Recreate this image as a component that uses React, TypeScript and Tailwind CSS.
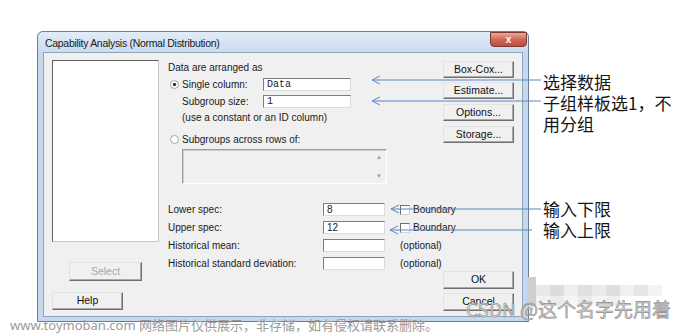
import React from "react";

const ui = { fontFamily: '"Liberation Sans", Arial, sans-serif' };
const cjk = { fontFamily: '"Noto Sans CJK SC", "Noto Sans", sans-serif' };

function Btn({ label, w = "w-[71px]", h = "h-[17px]", disabled = false }: { label: string; w?: string; h?: string; disabled?: boolean }) {
  return (
    <div
      className={`${w} ${h} shrink-0 flex items-center justify-center bg-[#f0f0f0] border border-t-[#e3e3e3] border-l-[#e3e3e3] border-b-[#6f6f6f] border-r-[#6f6f6f] shadow-[inset_-1px_-1px_0_#a9a9a9] text-[10.5px] ${disabled ? "text-[#a8a8a8]" : "text-[#111]"}`}
    >
      {label}
    </div>
  );
}

function TextBox({ value, w, mono = false }: { value?: string; w: string; mono?: boolean }) {
  return (
    <div
      className={`${w} h-full shrink-0 bg-white border border-t-[#7d7d7d] border-l-[#7d7d7d] border-b-[#dcdcdc] border-r-[#dcdcdc] flex items-center pl-[3px] text-[10px] text-[#222] leading-none`}
      style={mono ? { fontFamily: '"Liberation Mono", monospace' } : undefined}
    >
      {value}
    </div>
  );
}

function Radio({ checked }: { checked?: boolean }) {
  return (
    <svg width="9" height="9" viewBox="0 0 9 9" className="shrink-0">
      <circle cx="4.5" cy="4.5" r="4" fill="#fff" stroke="#9a9a9a" strokeWidth="0.9" />
      {checked && <circle cx="4.5" cy="4.5" r="1.7" fill="#333" />}
    </svg>
  );
}

function Check() {
  return <div className="w-[10px] h-[10px] bg-white border border-t-[#6d6d6d] border-l-[#6d6d6d] border-b-[#d5d5d5] border-r-[#d5d5d5] shrink-0" />;
}

function SpecRow({ label, value, extra, check, mt }: { label: string; value?: string; extra: string; check?: boolean; mt: string }) {
  return (
    <div className={`flex items-center h-[13px] ${mt}`}>
      <div className="w-[155px] shrink-0 text-[10px] text-[#1a1a1a]">{label}</div>
      <TextBox value={value} w="w-[62px]" />
      <div className="ml-[15px] shrink-0 flex items-center gap-[3px] text-[10px] text-[#1a1a1a] whitespace-nowrap">
        {check && <Check />}
        <span>{extra}</span>
      </div>
    </div>
  );
}

function Arrow({ x1, x2, y }: { x1: number; x2: number; y: number }) {
  return (
    <g stroke="#5b86c5" strokeWidth="1" fill="none">
      <line x1={x1} y1={y} x2={x2} y2={y} />
      <polyline points={`${x1 + 8},${y - 4} ${x1},${y} ${x1 + 8},${y + 4}`} />
    </g>
  );
}

export default function App() {
  return (
    <div className="w-[692px] h-[336px] bg-white relative overflow-hidden" style={ui}>
      <div className="flex pt-[31px] pl-[37px]">
        {/* Window */}
        <div className="w-[492px] h-[291px] shrink-0 flex flex-col border border-[#6a7d94] rounded-t-[6px] bg-[#c6d8ed]">
          {/* title bar */}
          <div className="h-[20px] flex items-start rounded-t-[6px] bg-gradient-to-b from-[#e2ecf7] to-[#cadcf0]">
            <div className="pl-[7px] pt-[6px] text-[10.5px] text-[#1a1a1a] leading-none tracking-[-0.3px]">
              Capability Analysis (Normal Distribution)
            </div>
            <div className="ml-auto mr-[1px] w-[37px] h-[15px] rounded-b-[4px] border border-[#7a3a33] bg-gradient-to-b from-[#e9a99c] via-[#d0685a] to-[#c24a3b] flex items-center justify-center text-white text-[10px] font-bold leading-none">
              x
            </div>
          </div>
          {/* client */}
          <div className="mx-[5px] mb-[4px] flex-1 border border-[#8ea3bd] bg-[#f0f0f0] flex pt-[7px] pl-[8px]">
            {/* left column */}
            <div className="w-[107px] shrink-0 flex flex-col">
              <div className="h-[182px] bg-white border border-t-[#5f5f5f] border-l-[#5f5f5f] border-b-[#c8c8c8] border-r-[#c8c8c8]" />
              <div className="mt-[20px] self-center">
                <Btn label="Select" w="w-[73px]" h="h-[19px]" disabled />
              </div>
              <div className="mt-[11px]">
                <Btn label="Help" h="h-[18px]" />
              </div>
            </div>
            {/* middle column */}
            <div className="ml-[9px] flex-1 min-w-0 flex flex-col text-[10px] text-[#1a1a1a]">
              <div className="h-[13px] flex items-center mt-[1px]">Data are arranged as</div>
              <div className="h-[13px] mt-[4px] flex items-center">
                <div className="w-[14px] shrink-0 flex items-center pl-[2px]"><Radio checked /></div>
                <div className="w-[81px] shrink-0">Single column:</div>
                <TextBox value="Data" w="w-[88px]" mono />
              </div>
              <div className="h-[13px] mt-[4px] flex items-center pl-[14px]">
                <div className="w-[81px] shrink-0">Subgroup size:</div>
                <TextBox value="1" w="w-[88px]" mono />
              </div>
              <div className="h-[12px] mt-[3px] flex items-center pl-[14px]">(use a constant or an ID column)</div>
              <div className="h-[12px] mt-[10px] flex items-center">
                <div className="w-[14px] shrink-0 flex items-center pl-[2px]"><Radio /></div>
                <div>Subgroups across rows of:</div>
              </div>
              <div className="ml-[14px] mt-[4px] w-[205px] h-[35px] shrink-0 bg-[#f0f0f0] border border-t-[#9c9c9c] border-l-[#9c9c9c] border-b-[#ffffff] border-r-[#ffffff] shadow-[inset_1px_1px_0_#d0d0d0] flex justify-end">
                <div className="w-[10px] mr-[2px] flex flex-col justify-between py-[4px] text-[6px] text-[#999] leading-none items-center">
                  <span>▲</span>
                  <span>▼</span>
                </div>
              </div>
              <SpecRow label="Lower spec:" value="8" extra="Boundary" check mt="mt-[19px]" />
              <SpecRow label="Upper spec:" value="12" extra="Boundary" check mt="mt-[5px]" />
              <SpecRow label="Historical mean:" extra="(optional)" mt="mt-[5px]" />
              <SpecRow label="Historical standard deviation:" extra="(optional)" mt="mt-[5px]" />
            </div>
            {/* right column */}
            <div className="w-[71px] shrink-0 mr-[8px] flex flex-col pt-[1px]">
              <Btn label="Box-Cox..." />
              <div className="mt-[4px]"><Btn label="Estimate..." /></div>
              <div className="mt-[5px]"><Btn label="Options..." /></div>
              <div className="mt-[5px]"><Btn label="Storage..." /></div>
              <div className="mt-auto mb-[5px] flex flex-col">
                <Btn label="OK" h="h-[18px]" />
                <div className="mt-[4px]"><Btn label="Cancel" h="h-[18px]" /></div>
              </div>
            </div>
          </div>
        </div>
        {/* annotations */}
        <div className="ml-[14px] flex flex-col text-[17px] text-[#151515] leading-[21px] whitespace-nowrap" style={cjk}>
          <div className="mt-[40px]">选择数据</div>
          <div>子组样板选1，不</div>
          <div>用分组</div>
          <div className="mt-[64px]">输入下限</div>
          <div>输入上限</div>
        </div>
      </div>

      {/* arrows overlay */}
      <svg className="absolute left-0 top-0 pointer-events-none" width="692" height="336">
        <Arrow x1={372} x2={541} y={80} />
        <Arrow x1={372} x2={541} y={101} />
        <Arrow x1={391} x2={541} y={209} />
        <Arrow x1={390} x2={532} y={230} />
      </svg>

      {/* mosaic blur */}
      <div className="absolute left-[527px] top-[277px] flex">
        <div className="w-[9px] h-[30px] bg-[#cfcfcf]" />
        <div className="flex flex-col mt-[8px]">
          <div className="flex">
            <div className="w-[14px] h-[11px] bg-[#e8e8e8]" />
            <div className="w-[14px] h-[11px] bg-[#dcdcdc]" />
            <div className="w-[14px] h-[11px] bg-[#eeeeee]" />
            <div className="w-[14px] h-[11px] bg-[#e0e0e0]" />
            <div className="w-[14px] h-[11px] bg-[#ebebeb]" />
            <div className="w-[14px] h-[11px] bg-[#dedede]" />
            <div className="w-[14px] h-[11px] bg-[#f0f0f0]" />
            <div className="w-[14px] h-[11px] bg-[#e6e6e6]" />
            <div className="w-[14px] h-[11px] bg-[#f3f3f3]" />
          </div>
          <div className="flex">
            <div className="w-[14px] h-[10px] bg-[#f2f2f2]" />
            <div className="w-[14px] h-[10px] bg-[#ececec]" />
            <div className="w-[14px] h-[10px] bg-[#f5f5f5]" />
            <div className="w-[14px] h-[10px] bg-[#eaeaea]" />
            <div className="w-[14px] h-[10px] bg-[#f4f4f4]" />
            <div className="w-[14px] h-[10px] bg-[#efefef]" />
          </div>
        </div>
      </div>

      {/* watermarks */}
      <div className="absolute left-[466px] top-[299px] text-[19px] leading-none text-[#d4d4d4] [-webkit-text-stroke:0.6px_#8c8c8c] whitespace-nowrap" style={cjk}>
        CSDN @这个名字先用着
      </div>
      <div className="absolute left-[10px] top-[319px] text-[13px] leading-none text-[#9a9a9a] whitespace-nowrap" style={{ fontFamily: '"Noto Sans", "Noto Sans CJK SC", sans-serif' }}>
        www.toymoban.com 网络图片仅供展示，非存储，如有侵权请联系删除。
      </div>
    </div>
  );
}
